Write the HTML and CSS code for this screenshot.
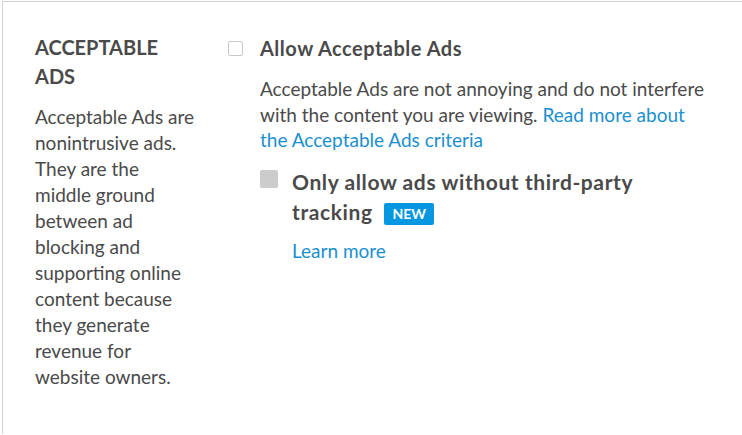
FILE: index.html
```html
<!DOCTYPE html>
<html lang="en">
<head>
    <meta charset="UTF-8">
    <title>Acceptable Ads</title>
    <link rel="stylesheet" href="styles.css">
</head>
<body>

    <div class="panel">
        <div class="intro">
            <h2>Acceptable Ads</h2>
            <p>Acceptable Ads are nonintrusive ads. They are the middle ground between ad blocking and supporting online content because they generate revenue for website owners.</p>
        </div>

        <div class="options">
            <label class="option-main">
                <span class="box"></span>
                <span class="option-title">Allow Acceptable Ads</span>
            </label>
            <p class="option-desc">Acceptable Ads are not annoying and do not interfere with the content you are viewing. <a href="#">Read more about the Acceptable Ads criteria</a></p>

            <div class="sub-option">
                <span class="box box-disabled"></span>
                <div class="sub-body">
                    <p class="sub-title">Only allow ads without third-party tracking <span class="badge">NEW</span></p>
                    <a class="learn-more" href="#">Learn more</a>
                </div>
            </div>
        </div>
    </div>

</body>
</html>
```

FILE: styles.css
```css
body {
    margin: 0;
    padding: 1px 0 0 2px;
    font-family: Lato, "Open Sans", sans-serif;
    color: #4a4a4a;
    background: white;
}
.panel {
    display: flex;
    min-height: 433px;
    border-top: 1px solid #d2d2d2;
    border-left: 1px solid #d2d2d2;
    padding: 31px 0 0 32px;
    box-sizing: border-box;
}
.intro {
    width: 160px;
    flex-shrink: 0;
}
.intro h2 {
    max-width: 130px;
    margin: 0 0 13px;
    font-size: 20px;
    line-height: 29px;
    text-transform: uppercase;
    font-weight: bold;
}
.intro p {
    margin: 0;
    font-size: 19px;
    line-height: 26px;
}
.options {
    margin-left: 33px;
    width: 490px;
}
.option-main {
    display: flex;
    align-items: center;
    height: 30px;
}
.box {
    display: inline-block;
    width: 13px;
    height: 13px;
    border: 1px solid #c8c8c8;
    border-radius: 2px;
    flex-shrink: 0;
}
.option-title {
    margin-left: 17px;
    font-size: 20px;
    letter-spacing: 0.5px;
    font-weight: bold;
}
.option-desc {
    width: 451px;
    margin: 13px 0 0 32px;
    font-size: 19px;
    line-height: 25.5px;
}
a {
    color: #1a8fcf;
    text-decoration: none;
}
.sub-option {
    display: flex;
    margin: 14px 0 0 32px;
}
.box-disabled {
    width: 18px;
    height: 18px;
    border: none;
    background: #cccccc;
    margin-top: 3px;
}
.sub-body {
    width: 380px;
}
.sub-title {
    margin: 0 0 0 14px;
    font-size: 21px;
    letter-spacing: 0.6px;
    line-height: 30px;
    font-weight: bold;
}
.badge {
    display: inline-block;
    margin-left: 6px;
    width: 50px;
    height: 22px;
    line-height: 22px;
    text-align: center;
    font-size: 14px;
    letter-spacing: 0;
    color: white;
    background: #0797e1;
    border-radius: 2px;
    vertical-align: 1px;
}
.learn-more {
    display: block;
    margin: 11px 0 0 14px;
    font-size: 19px;
    line-height: 26px;
}
```
